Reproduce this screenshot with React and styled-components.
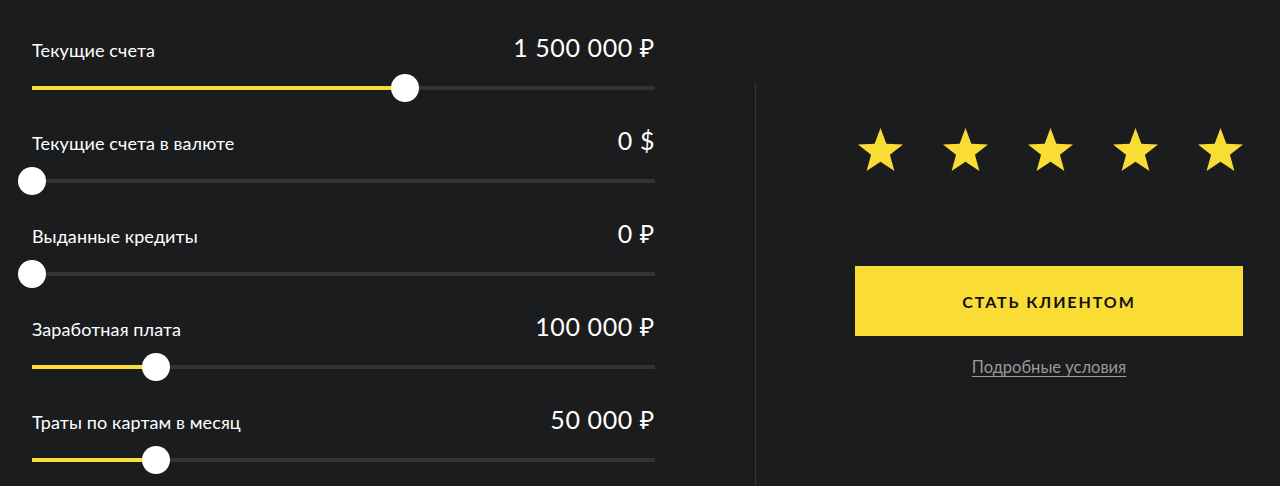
import React from "react";
import styled, { createGlobalStyle } from "styled-components";

const Global = createGlobalStyle`
  html, body { margin: 0; padding: 0; background: #1b1c1e; }
  body { font-family: Lato, "Noto Sans", sans-serif; color: #fff; }
`;

const Page = styled.div`
  display: flex;
  align-items: flex-start;
  height: 486px;
  box-sizing: border-box;
  padding: 32px 0 0 32px;
  background: #1b1c1e;
  overflow: hidden;
`;

const Sliders = styled.div`
  width: 623px;
  display: flex;
  flex-direction: column;
  gap: 23px;
`;

const Row = styled.div`
  display: flex;
  flex-direction: column;
`;

const Header = styled.div`
  display: flex;
  justify-content: space-between;
  align-items: baseline;
  height: 30px;
`;

const Label = styled.span`
  font-size: 18px;
  line-height: 30px;
  letter-spacing: 0.1px;
`;

const Value = styled.span`
  font-size: 25px;
  line-height: 30px;
  font-weight: 400;
  letter-spacing: 0.6px;
`;

const Track = styled.div`
  position: relative;
  height: 4px;
  margin: 24px 0 12px;
  background: #323335;
`;

const Fill = styled.div`
  position: absolute;
  left: 0;
  top: 0;
  bottom: 0;
  background: #f9dc34;
`;

const Thumb = styled.div`
  position: absolute;
  top: 50%;
  width: 28px;
  height: 28px;
  border-radius: 50%;
  background: #fff;
  transform: translate(-50%, -50%);
`;

const Aside = styled.div`
  margin: 51px 0 0 100px;
  height: 379px;
  border-left: 1px solid #323335;
  padding: 45px 0 0 99px;
  width: 388px;
  box-sizing: content-box;
  display: flex;
  flex-direction: column;
  align-items: center;
`;

const Stars = styled.div`
  width: 100%;
  box-sizing: border-box;
  padding-left: 3px;
  display: flex;
  justify-content: space-between;
`;

const Button = styled.button`
  margin-top: 95px;
  width: 388px;
  height: 70px;
  border: none;
  background: #f9dc34;
  color: #111;
  font-family: Lato, "Noto Sans", sans-serif;
  font-size: 16px;
  font-weight: 700;
  letter-spacing: 1.9px;
  cursor: pointer;
`;

const Link = styled.a`
  margin-top: 21px;
  font-size: 16.5px;
  line-height: 20px;
  color: #9a9a9a;
  text-decoration: underline;
  text-underline-offset: 3px;
`;

const Star = () => (
  <svg width="45" height="43" viewBox="-95.1 -100 190.2 180.9">
    <polygon
      fill="#f9dc34"
      points="0,-100 24.7,-34 95.1,-30.9 39.9,13 58.8,80.9 0,42 -58.8,80.9 -39.9,13 -95.1,-30.9 -24.7,-34"
    />
  </svg>
);

const rows = [
  { label: "Текущие счета", value: "1 500 000 ₽", pos: 373 },
  { label: "Текущие счета в валюте", value: "0 $", pos: 0 },
  { label: "Выданные кредиты", value: "0 ₽", pos: 0 },
  { label: "Заработная плата", value: "100 000 ₽", pos: 124 },
  { label: "Траты по картам в месяц", value: "50 000 ₽", pos: 124 },
];

export default function App() {
  return (
    <>
      <Global />
      <Page>
        <Sliders>
          {rows.map((r) => (
            <Row key={r.label}>
              <Header>
                <Label>{r.label}</Label>
                <Value>{r.value}</Value>
              </Header>
              <Track>
                <Fill style={{ width: r.pos }} />
                <Thumb style={{ left: r.pos }} />
              </Track>
            </Row>
          ))}
        </Sliders>
        <Aside>
          <Stars>
            {[0, 1, 2, 3, 4].map((i) => (
              <Star key={i} />
            ))}
          </Stars>
          <Button>СТАТЬ КЛИЕНТОМ</Button>
          <Link href="#">Подробные условия</Link>
        </Aside>
      </Page>
    </>
  );
}
